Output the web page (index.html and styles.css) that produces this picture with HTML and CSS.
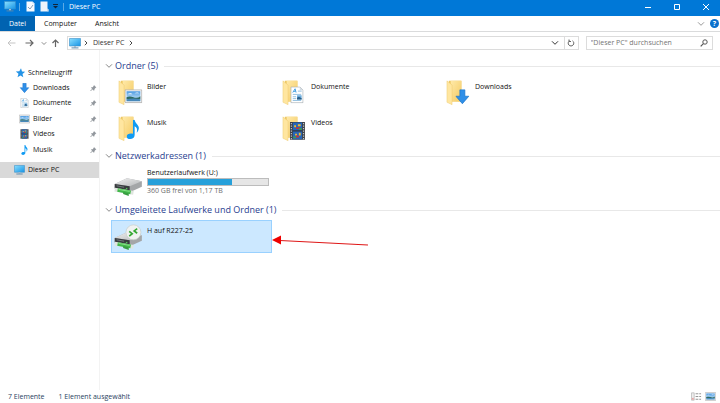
FILE: index.html
```html
<!DOCTYPE html>
<html lang="de">
<head>
<meta charset="utf-8">
<title>Dieser PC</title>
<link rel="stylesheet" href="styles.css">
</head>
<body>
<svg class="defs" aria-hidden="true">
  <defs>
    <linearGradient id="fold" x1="0" y1="0" x2="1" y2="1"><stop offset="0" stop-color="#ffe9a8"/><stop offset="1" stop-color="#f4ca62"/></linearGradient>
    <linearGradient id="screen" x1="0" y1="0" x2="1" y2="1"><stop offset="0" stop-color="#8be0ff"/><stop offset="1" stop-color="#1593e6"/></linearGradient>
    <linearGradient id="metal" x1="0" y1="0" x2="1" y2="1"><stop offset="0" stop-color="#f2f2f2"/><stop offset="1" stop-color="#b4b6b8"/></linearGradient>
    <linearGradient id="sky" x1="0" y1="0" x2="0" y2="1"><stop offset="0" stop-color="#4d9be3"/><stop offset="1" stop-color="#dcf1fb"/></linearGradient>
    <symbol id="pc" viewBox="0 0 12 11"><path d="M.5.5h11v7.5H.5z" fill="url(#screen)" stroke="#3b8fc8" stroke-width=".6"/><path d="M5 8h2v1.5H5z" fill="#a9bccb"/><path d="M2.5 9.4h7v1h-7z" fill="#5b87a8"/></symbol>
    <symbol id="folder" viewBox="0 0 17 27"><path d="M3 1h13.5v22H3z" fill="#edc864"/><path d="M5 1h11.500v22H5z" fill="url(#fold)"/><path d="M1 1l5.500 4.500V26.500L1 24z" fill="#ffe6a0" stroke="#e9c25c" stroke-width=".4"/></symbol>
    <symbol id="image" viewBox="0 0 18 14"><path d="M.5.5h17v13H.5z" fill="#f7f7f7" stroke="#a3a3a3" stroke-width=".8"/><path d="M2 2h14v10H2z" fill="url(#sky)"/><path d="M2 8q3-1.500 7 0t7-1v3H2z" fill="#2f6a62"/><path d="M2 10q7-1.500 14 0v2H2z" fill="#4788ba"/><path d="M3 5q3-2 5 0zM10 4q3-1.500 5 0z" fill="#fff"/></symbol>
    <symbol id="doc" viewBox="0 0 14 18"><path d="M.5.5h9.500L13.500 4v13.500H.5z" fill="#fff" stroke="#9fa7ad" stroke-width=".8"/><path d="M10 .5V4h3.500z" fill="#d5dde3"/><path d="M2.500 6.500L5 2.500l1 4M3.500 5.200h2" fill="none" stroke="#3c9be0"/><path d="M8 5h4M2.500 8.500h9M2.500 11h3.500M2.500 13h3.500M2.500 15h9" stroke="#83b8dc" stroke-width=".9"/><path d="M7 9.500h5V14H7z" fill="#6eaede"/><path d="M7 12l2-1 3 1.500V14H7z" fill="#285e87"/></symbol>
    <symbol id="down" viewBox="0 0 14 15"><path d="M4.500.5h5v6.500h4L7 14.500.5 7h4z" fill="#2f8fe8" stroke="#1975cb" stroke-width=".7"/></symbol>
    <symbol id="note" viewBox="0 0 14 21"><path d="M7 0h1.800c.4 4 5 5.500 4.500 9.500-.2 2-1.300 3.500-2.300 4.500 1-4 .1-6-2.200-7v9.500c0 3-2.300 4.300-4.800 4.300-2.300 0-3.700-1.200-3.700-2.900C.3 15.500 3.500 14 7 15z" fill="#109bf3"/></symbol>
    <symbol id="film" viewBox="0 0 17 20"><path d="M.5.5h16v19H.5z" fill="#3f4145"/><path d="M3.500 1h10v18h-10z" fill="#2766b8"/><path d="M3.500 9.300h10v1.300h-10z" fill="#30343a"/><path d="M2 1.500v17.500M15 1.500v17.500" stroke="#c4c7ca" stroke-width="1.200" stroke-dasharray="1.300 1.400"/><path d="M5 4h2v2H5zM9 3h3v2H9zM6 13h2v2H6zM10 12h2v3h-2z" fill="#efb92e"/><path d="M7 6h4v2H7zM7 15h3v2H7z" fill="#c2353c"/><path d="M10 7h3v2h-3zM4 16h3v2H4z" fill="#3f9b4f"/></symbol>
    <symbol id="drive" viewBox="0 0 31 20"><path d="M1 7L14 .8 30 4v6L17 16 1 12z" fill="#a4a6a8"/><path d="M1 7L14 .8 30 4 17 9.500z" fill="url(#metal)"/><path d="M1 7l16 2.500v5L1 11.500z" fill="#383b3e"/><path d="M3 9l8 1.500" stroke="#777d81"/><path d="M13 11.800h1.500" stroke="#55e25c"/><path d="M1 13l20 3.500" stroke="#dfe5df" stroke-width="4"/><path d="M4 13.500l14 2.500" stroke="#42b84b" stroke-width="4"/><path d="M5 12.800l12 2.200" stroke="#8be28a"/><path d="M10 15.500l6 1.500v2.800l-6-2z" fill="#389d42"/></symbol>
    <symbol id="pin" viewBox="0 0 8 8"><path d="M4.500.7l2.800 2.800-.8.3-1.300 1.300-.2 1.500-.6.4L1.200 3.800l.4-.6 1.500-.2L4.300 1.500z" fill="#92979d"/><path d="M2.800 5.200L.7 7.300" stroke="#858a90"/></symbol>
    <symbol id="chev" viewBox="0 0 8 6"><path d="M1 1.300l3 3 3-3" fill="none" stroke="currentColor"/></symbol>
    <symbol id="right" viewBox="0 0 4 6"><path d="M.8.800L3 3 .8 5.200" fill="none" stroke="currentColor" stroke-width=".9"/></symbol>
  </defs>
</svg>
<div class="window">
  <header class="titlebar">
    <svg class="i-pc"><use href="#pc"/></svg>
    <span class="sep"></span>
    <button class="quick" aria-label="Eigenschaften"><svg viewBox="0 0 9 11"><path d="M.5.500h6l2 2v8h-8z" fill="#f5faff"/><path d="M6.500.5v2h2z" fill="#bed8ef"/><path d="M2 6l2 2 3-4" fill="none" stroke="#87a1b8"/></svg></button>
    <button class="quick" aria-label="Neuer Ordner"><svg viewBox="0 0 9 11"><path d="M.5.500h7v7l1 1v2h-8z" fill="#edf4fb"/><path d="M7.500 7.500v3h1v-2z" fill="#aac8e3"/></svg></button>
    <button class="more" aria-label="Schnellzugriff anpassen"><svg viewBox="0 0 5 5"><path d="M0 .5h5" stroke="#10263c"/><path d="M0 2h5L2.500 4.500z" fill="#10263c"/></svg></button>
    <span class="sep"></span>
    <h1>Dieser PC</h1>
    <div class="controls">
      <button aria-label="Minimieren"><svg viewBox="0 0 8 8"><path d="M1 4.500h6" stroke="#fff"/></svg></button>
      <button aria-label="Maximieren"><svg viewBox="0 0 8 8"><path d="M1.500 1.500h5v5h-5z" fill="none" stroke="#fff"/></svg></button>
      <button aria-label="Schließen"><svg viewBox="0 0 8 8"><path d="M1 1l6 6M7 1L1 7" stroke="#fff"/></svg></button>
    </div>
  </header>
  <nav class="tabs">
    <button class="file">Datei</button>
    <button>Computer</button>
    <button>Ansicht</button>
    <div class="ribbon-end">
      <button class="chev light" aria-label="Menüband erweitern"><svg><use href="#chev"/></svg></button>
      <button class="help" aria-label="Hilfe">?</button>
    </div>
  </nav>
  <div class="navbar">
    <div class="history">
      <button class="off" aria-label="Zurück"><svg viewBox="0 0 9 8"><path d="M8.500 4H1M4 1L1 4l3 3" fill="none" stroke="currentColor"/></svg></button>
      <button aria-label="Vorwärts"><svg viewBox="0 0 9 8"><path d="M.5 4H8M5 1l3 3-3 3" fill="none" stroke="currentColor" stroke-width="1.200"/></svg></button>
      <button class="small" aria-label="Zuletzt besucht"><svg><use href="#chev"/></svg></button>
      <button aria-label="Nach oben"><svg viewBox="0 0 9 8"><path d="M4.500 8V1M1.500 4l3-3 3 3" fill="none" stroke="currentColor" stroke-width="1.200"/></svg></button>
    </div>
    <div class="address">
      <svg class="i-pc"><use href="#pc"/></svg>
      <svg class="crumb"><use href="#right"/></svg>
      <span>Dieser PC</span>
      <svg class="crumb"><use href="#right"/></svg>
      <button class="chev drop" aria-label="Verlauf"><svg><use href="#chev"/></svg></button>
      <button class="reload" aria-label="Aktualisieren"><svg viewBox="0 0 8 8"><path d="M5.500 1.800A2.800 2.800 0 1 1 2.500 1.800M2 .5v2h2" fill="none" stroke="#666"/></svg></button>
    </div>
    <div class="search">
      <input type="text" aria-label="Suchen" placeholder="&quot;Dieser PC&quot; durchsuchen">
      <svg viewBox="0 0 8 8"><circle cx="5" cy="3" r="2.200" fill="none" stroke="#555"/><path d="M3.400 4.600L.7 7.300" stroke="#555" stroke-width="1.200"/></svg>
    </div>
  </div>
  <div class="body">
    <nav class="side">
      <a class="root" href="#"><svg viewBox="0 0 10 10"><path d="M5.500.3l1 3.200 3.200.3L7 5.900l.8 3.300L5 7.400 2 9.300l1-3.500L.3 3.500l3.500-.2z" fill="#2493e6"/></svg>Schnellzugriff</a>
      <div class="pinned">
        <a href="#"><svg><use href="#down"/></svg>Downloads<svg class="pin"><use href="#pin"/></svg></a>
        <a href="#"><svg><use href="#doc"/></svg>Dokumente<svg class="pin"><use href="#pin"/></svg></a>
        <a href="#"><svg><use href="#image"/></svg>Bilder<svg class="pin"><use href="#pin"/></svg></a>
        <a href="#"><svg><use href="#film"/></svg>Videos<svg class="pin"><use href="#pin"/></svg></a>
        <a href="#"><svg><use href="#note"/></svg>Musik<svg class="pin"><use href="#pin"/></svg></a>
      </div>
      <a class="root current" href="#"><svg><use href="#pc"/></svg>Dieser PC</a>
    </nav>
    <main>
      <section>
        <h2><svg><use href="#chev"/></svg>Ordner (5)</h2>
        <div class="items">
          <a class="item" href="#"><svg viewBox="0 0 31 28"><use href="#folder" width="17" height="27"/><use href="#image" x="7" y="10" width="19" height="15"/></svg><span>Bilder</span></a>
          <a class="item" href="#"><svg viewBox="0 0 31 28"><use href="#folder" width="17" height="27"/><use href="#doc" x="9" y="7" width="14" height="18"/></svg><span>Dokumente</span></a>
          <a class="item" href="#"><svg viewBox="0 0 31 28"><use href="#folder" width="17" height="27"/><use href="#down" x="10" y="10" width="15" height="16"/></svg><span>Downloads</span></a>
          <a class="item" href="#"><svg viewBox="0 0 31 28"><use href="#folder" width="17" height="27"/><use href="#note" x="9" y="4" width="14" height="21"/></svg><span>Musik</span></a>
          <a class="item" href="#"><svg viewBox="0 0 31 28"><use href="#folder" width="17" height="27"/><use href="#film" x="8" y="6" width="17" height="20"/></svg><span>Videos</span></a>
        </div>
      </section>
      <section>
        <h2><svg><use href="#chev"/></svg>Netzwerkadressen (1)</h2>
        <div class="items">
          <a class="item drive" href="#"><svg viewBox="0 0 31 28"><use href="#drive" y="8" x="-5" width="32" height="20"/></svg><span>Benutzerlaufwerk (U:)<span class="meter"><span class="used"></span></span><small>360 GB frei von 1,17 TB</small></span></a>
        </div>
      </section>
      <section>
        <h2><svg><use href="#chev"/></svg>Umgeleitete Laufwerke und Ordner (1)</h2>
        <div class="items">
          <a class="item selected" href="#"><svg viewBox="0 0 31 28"><use href="#drive" y="8" x="-5" width="32" height="20"/><circle cx="16.500" cy="9" r="8" fill="#f0f2f1" stroke="#c5cbc8" stroke-width=".7"/><path d="M12 8l3.200 2.500L12 13M20.500 5l-3.200 2.500L20.500 10" fill="none" stroke="#35a833" stroke-width="1.800"/></svg><span>H auf R227-25</span>
            <svg class="arrow" viewBox="0 0 98 14"><path d="M9 5.500L97 10" stroke="#df1717" stroke-width="1.200"/><path d="M1 5l9-4.500v9z" fill="#ee0000"/></svg></a>
        </div>
      </section>
    </main>
  </div>
  <footer>
    <span>7 Elemente</span><span>1 Element ausgewählt</span>
    <div class="views">
      <button aria-label="Details"><svg viewBox="0 0 12 9"><path d="M.5.500h3v8h-3z" fill="#eee" stroke="#aaa" stroke-width=".7"/><path d="M5 1.500h3M9 1.500h2M5 4.500h3M9 4.500h2M5 7.500h3M9 7.500h2" stroke="#8c8c8c"/><path d="M1 6h2v2H1z" fill="#e8a5a5"/></svg></button>
      <button aria-label="Große Symbole"><svg><use href="#image"/></svg></button>
    </div>
  </footer>
</div>
</body>
</html>
```
FILE: styles.css
```css
* { box-sizing: border-box; }
body { margin: 0; background: #fff; color: #111; font: 7px/10px "Open Sans", "Noto Sans", sans-serif; }
svg { display: block; flex: none; }
.defs { position: absolute; width: 0; height: 0; }
button { display: flex; align-items: center; justify-content: center; border: 0; padding: 0; background: none; color: inherit; font: inherit; }
a { color: inherit; text-decoration: none; }
h1, h2 { margin: 0; font-weight: 400; }
.window { display: flex; flex-direction: column; min-height: 100vh; }
.i-pc { width: 12px; height: 11px; }

.titlebar { display: flex; align-items: center; height: 16px; padding: 0 0 3px 4px; background: #0078d7; color: #fff; }
.titlebar h1 { margin-left: 2px; font-size: 7px; }
.sep { width: 1px; height: 8px; margin: 0 3px; background: #5ca9e5; }
.quick { width: 14px; }
.quick svg { width: 9px; height: 11px; }
.more { width: 9px; }
.more svg { width: 5px; height: 5px; }
.controls { display: flex; margin-left: auto; }
.controls button { width: 29px; }
.controls svg { width: 8px; height: 8px; }

.tabs { display: flex; height: 16px; border-bottom: 1px solid #dadbdc; }
.tabs > button { padding: 0 9px; }
.tabs .file { width: 35px; padding: 0; background: #0063b1; color: #fff; }
.ribbon-end { display: flex; align-items: center; gap: 5px; margin-left: auto; padding-right: 1px; }
.chev svg { width: 8px; height: 6px; }
.light { color: #999; }
.help { width: 9px; height: 9px; border-radius: 50%; background: #0a70cc; color: #fff; font-weight: 700; }

.navbar { display: flex; gap: 7px; padding: 4px 7px 0 5px; color: #666; }
.history { display: flex; width: 55px; gap: 3px; padding-left: 2px; align-items: center; }
.history svg { width: 9px; height: 8px; }
.history .off { margin-right: 6px; color: #c5c5c5; }
.history .small { width: 11px; margin-left: 3px; }
.history .small svg { width: 6px; height: 5px; }
.address { display: flex; align-items: center; flex: 1; height: 14px; border: 1px solid #dcdcdc; padding-left: 1px; color: #333; gap: 5px; }
.address > svg:first-child { margin-right: -2px; }
.crumb { width: 4px; height: 6px; }
.drop { margin-left: auto; }
.reload { align-self: stretch; width: 14px; border-left: 1px solid #dcdcdc; }
.reload svg { width: 8px; height: 8px; }
.search { display: flex; align-items: center; width: 18%; height: 14px; padding: 0 4px; border: 1px solid #dcdcdc; }
.search input { flex: 1; min-width: 0; border: 0; padding: 0; outline: 0; font: inherit; }
.search input::placeholder { color: #747474; opacity: 1; }
.search svg { width: 8px; height: 8px; }

.body { display: flex; flex: 1; }
.side { width: 100px; padding-top: 15px; border-right: 1px solid #f3f3f3; }
.side a { display: flex; align-items: center; height: 15px; padding: 0 2px 0 19px; gap: 3px; }
.side a > svg { width: 11px; height: 10px; }
.pinned { display: flex; flex-direction: column; justify-content: space-between; height: 77px; }
.side .root { padding-left: 15px; gap: 2px; }
.side .current { margin-top: 5px; background: #d9d9d9; padding-left: 14px; gap: 3px; height: 16px; }
.side a > .pin { width: 7px; height: 8px; margin-left: auto; }

main { flex: 1; min-width: 0; padding: 10px 0 0 5px; }
section { margin-bottom: 5px; }
h2 { display: flex; align-items: center; height: 12px; margin-bottom: 4px; color: #28408f; font-size: 9px; gap: 2px; }
h2 svg { width: 8px; height: 6px; color: #888; }
h2::after { content: ""; flex: 1; height: 1px; margin-left: 4px; background: #e8e8e8; }
.items { display: grid; grid-template-columns: repeat(3, 161px); gap: 3px; padding-left: 6px; }
.item { position: relative; display: flex; height: 33px; padding: 2px 2px 0 6px; border: 1px solid transparent; }
.item > svg:first-child { width: 29px; height: 28px; overflow: visible; }
.item > span { flex: 1; padding-top: 3px; }
.drive > span { padding-top: 0; margin-top: -1px; }
.meter { display: block; height: 8px; border: 1px solid #bcbcbc; background: #e6e6e6; }
.used { display: block; width: 70%; height: 100%; background: #26a0da; }
small { display: block; font-size: 7px; color: #6d6d6d; }
.selected { background: #cce8ff; border-color: #99d1ff; }
.arrow { position: absolute; left: 100%; top: 14px; width: 98px; height: 14px; }

footer { display: flex; align-items: center; height: 13px; padding: 0 4px 0 8px; gap: 14px; color: #29415d; }
.views { display: flex; gap: 3px; margin-left: auto; }
.views svg { width: 11px; height: 9px; }
```
